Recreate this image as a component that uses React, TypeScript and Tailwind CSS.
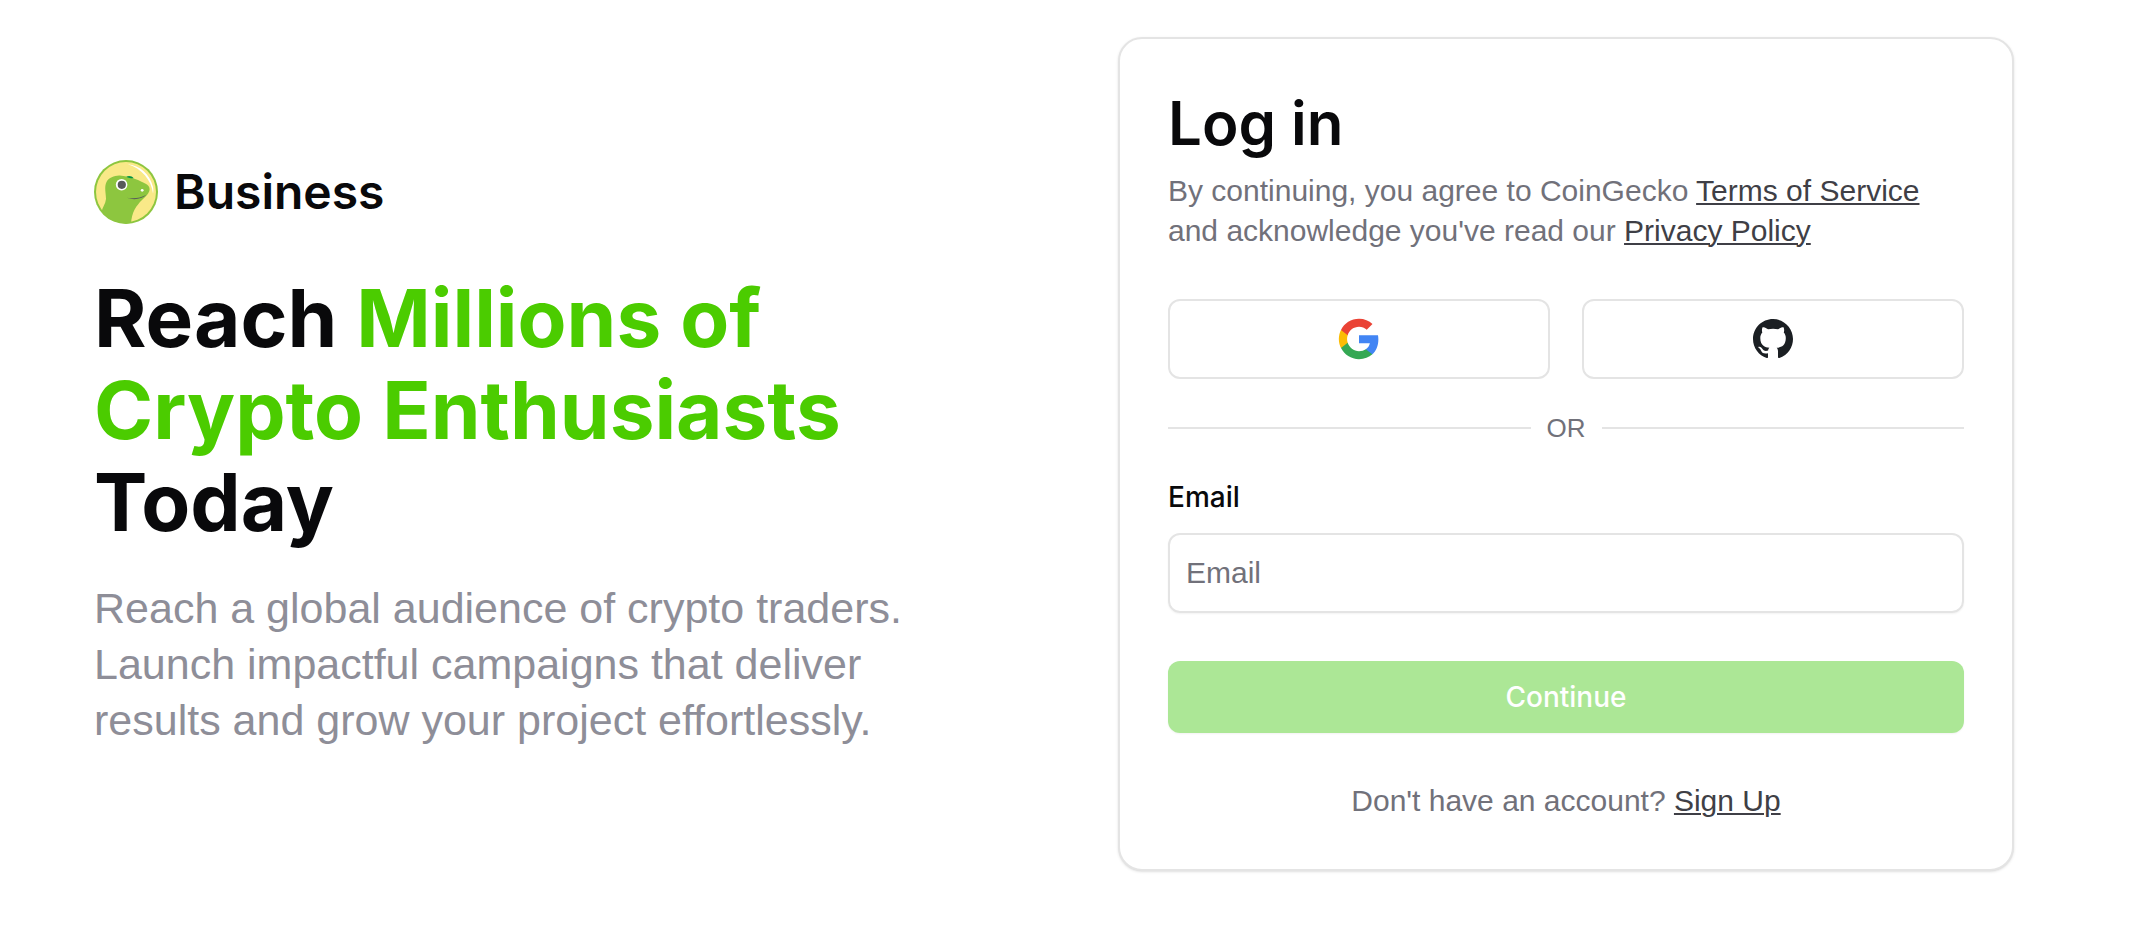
import React from "react";

function GeckoLogo() {
  return (
    <svg viewBox="0 0 64 64" className="size-16 shrink-0" aria-hidden="true">
      <defs>
        <clipPath id="disc">
          <circle cx="32" cy="32" r="31.5" />
        </clipPath>
      </defs>
      <circle cx="32" cy="32" r="32" fill="#8dc63f" />
      <circle cx="32" cy="32" r="30" fill="#f9e988" />
      <path
        clipPath="url(#disc)"
        fill="#8dc63f"
        d="M7.500 52C8.500 47 11.500 44 12 39C12 33 10 27 12.500 22C15 17.500 20 16 25 15.600C28 15.400 30 16.300 33 16.800C38 17.500 43 19.500 47.500 21.800C52 23.800 55.800 25.500 55.600 29.500C55.300 33.500 51.500 36.500 48 40C42.500 45.500 37.500 52 37 64H20Z"
      />
      <path d="M32.300 16.700C34.500 15.400 38 15.800 39.700 18.200C37 18.300 34.500 17.800 32.300 16.700Z" fill="#009345" />
      <path d="M33.500 4.200C46 5 56 14.500 59 27C59.500 29.500 59.400 32 59 33.500C57.500 20 47.500 8.200 33.500 4.200Z" fill="#fff" />
      <circle cx="27.600" cy="24.700" r="5.800" fill="#fff" />
      <circle cx="27.800" cy="24.800" r="4.100" fill="#58595b" />
      <circle cx="48.200" cy="30.300" r="1.400" fill="#fff" />
      <path d="M33 37.800C39.500 39 46.500 38.300 52.500 34.800C47.500 39.300 39.500 40.300 33 37.800Z" fill="#58595b" />
    </svg>
  );
}

function GoogleIcon() {
  return (
    <svg viewBox="0 0 24 24" className="size-11" aria-hidden="true">
      <path fill="#4285f4" d="M22.56 12.25c0-.78-.07-1.53-.2-2.250H12v4.260h5.920c-.26 1.370-1.040 2.530-2.210 3.310v2.770h3.570c2.080-1.920 3.280-4.740 3.280-8.090z" />
      <path fill="#34a853" d="M12 23c2.970 0 5.460-.98 7.280-2.660l-3.570-2.770c-.98.66-2.230 1.060-3.710 1.060-2.860 0-5.290-1.930-6.160-4.530H2.180v2.840C3.990 20.530 7.700 23 12 23z" />
      <path fill="#fbbc05" d="M5.840 14.090c-.22-.66-.35-1.360-.35-2.090s.13-1.430.35-2.090V7.070H2.180C1.430 8.550 1 10.220 1 12s.43 3.450 1.180 4.930l3.660-2.840z" />
      <path fill="#ea4335" d="M12 5.380c1.620 0 3.060.56 4.210 1.640l3.150-3.150C17.450 2.090 14.970 1 12 1 7.700 1 3.990 3.470 2.180 7.070l3.660 2.840c.87-2.600 3.300-4.530 6.160-4.530z" />
    </svg>
  );
}

function GitHubIcon() {
  return (
    <svg viewBox="0 0 16 16" className="size-10" fill="#1b1f23" aria-hidden="true">
      <path d="M8 0C3.580 0 0 3.580 0 8c0 3.540 2.290 6.530 5.470 7.590.4.070.55-.17.55-.38 0-.19-.01-.82-.01-1.490-2.010.37-2.530-.49-2.690-.94-.09-.23-.48-.94-.82-1.130-.28-.15-.68-.52-.01-.53.63-.01 1.080.58 1.230.82.72 1.210 1.870.87 2.330.66.07-.52.28-.87.51-1.070-1.780-.2-3.640-.89-3.640-3.950 0-.87.31-1.590.82-2.150-.08-.2-.36-1.020.08-2.120 0 0 .67-.21 2.200.82.64-.18 1.320-.27 2-.27.68 0 1.360.09 2 .27 1.530-1.040 2.200-.82 2.200-.82.44 1.100.16 1.920.08 2.120.51.56.82 1.270.82 2.150 0 3.070-1.870 3.750-3.650 3.950.29.25.54.73.54 1.480 0 1.070-.01 1.930-.01 2.200 0 .21.15.46.55.38A8.013 8.013 0 0016 8c0-4.420-3.580-8-8-8z" />
    </svg>
  );
}

const linkClass = "text-[#3f3f46] underline decoration-2 underline-offset-2";
const socialClass =
  "flex h-20 items-center justify-center rounded-xl border-2 border-[#e4e4e4] bg-white";

function Intro() {
  return (
    <section className="max-w-4xl">
      <div className="flex h-16 items-center gap-4">
        <GeckoLogo />
        <span className="font-['Inter',sans-serif] text-5xl font-semibold">Business</span>
      </div>
      <h1 className="mt-12 font-['Inter',sans-serif] text-[80px] leading-[92px] font-bold">
        Reach <span className="text-[#4bcc00]">Millions of Crypto Enthusiasts</span> Today
      </h1>
      <p className="mt-8 text-[43px] leading-[56px] text-[#8e8e98]">
        Reach a global audience of crypto traders. Launch impactful campaigns that deliver results and
        grow your project effortlessly.
      </p>
    </section>
  );
}

function LoginCard() {
  return (
    <form
      className="w-full max-w-4xl rounded-3xl border-2 border-[#e4e4e4] bg-white p-12 text-[30px] leading-10 text-[#71717a] shadow"
      onSubmit={(event) => event.preventDefault()}
    >
      <h2 className="font-['Inter',sans-serif] text-[60px] leading-[72px] font-semibold text-[#09090b]">
        Log in
      </h2>
      <p className="mt-3">
        By continuing, you agree to CoinGecko{" "}
        <a href="#terms" className={linkClass}>Terms of Service</a> and acknowledge you've read our{" "}
        <a href="#privacy" className={linkClass}>Privacy Policy</a>
      </p>
      <div className="mt-12 grid grid-cols-2 gap-8">
        <button type="button" aria-label="Google" className={socialClass}>
          <GoogleIcon />
        </button>
        <button type="button" aria-label="GitHub" className={socialClass}>
          <GitHubIcon />
        </button>
      </div>
      <div className="my-8 flex items-center gap-4 text-[26px] leading-[34px]">
        <span className="h-[2px] flex-1 bg-[#e4e4e4]" />
        OR
        <span className="h-[2px] flex-1 bg-[#e4e4e4]" />
      </div>
      <label
        htmlFor="email"
        className="block font-['Inter',sans-serif] text-[28px] leading-10 font-medium text-[#09090b]"
      >
        Email
      </label>
      <input
        id="email"
        type="email"
        placeholder="Email"
        className="mt-4 block h-20 w-full rounded-xl border-2 border-[#e4e4e4] px-4 text-[#09090b] shadow-xs outline-none placeholder:text-[#71717a]"
      />
      <button
        type="submit"
        className="mt-12 block h-18 w-full rounded-xl bg-[#ace796] font-['Inter',sans-serif] text-[28px] font-medium text-white shadow-xs"
      >
        Continue
      </button>
      <p className="mt-12 text-center">
        Don't have an account? <a href="#signup" className={linkClass}>Sign Up</a>
      </p>
    </form>
  );
}

export default function App() {
  return (
    <main className="grid min-h-screen grid-cols-2 items-center gap-[62px] bg-white px-[94px] pb-5 font-['Liberation_Sans',Arial,sans-serif] text-[#09090b]">
      <Intro />
      <div className="flex justify-center">
        <LoginCard />
      </div>
    </main>
  );
}
